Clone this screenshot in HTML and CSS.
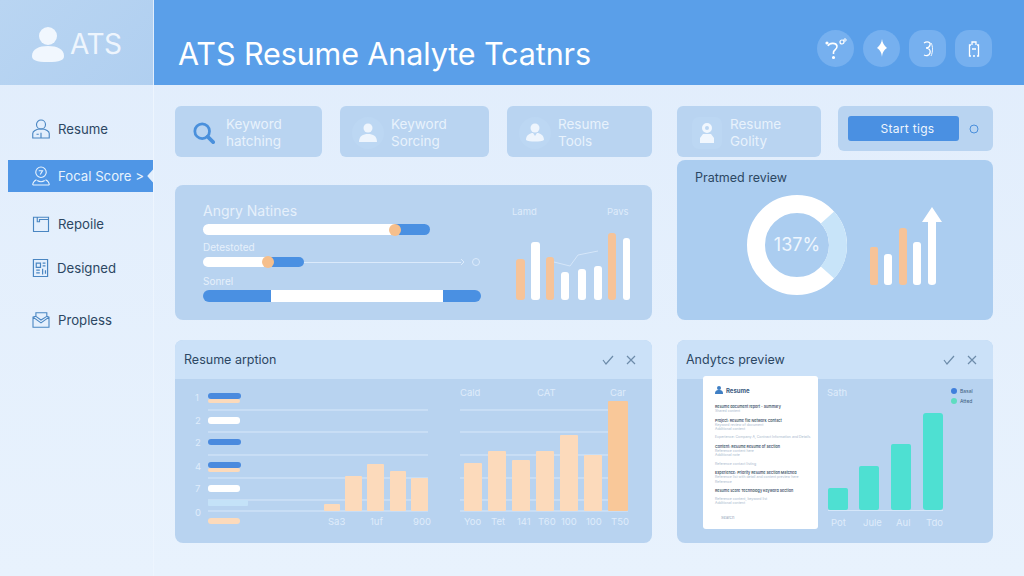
FILE: index.html
```html
<!DOCTYPE html>
<html lang="en">

<head>
	<meta name="viewport" content="width=device-width, initial-scale=1">
	<title>ATS Resume Analyte Tcatnrs</title>
	<link rel="stylesheet" href="styles.css">
</head>

<body>
	<div class="logo">
		<svg width="34" height="38" viewBox="0 0 34 38">
			<circle cx="17" cy="11" r="9" fill="#f1f7fe" />
			<path d="M1 31c0-7 7-10 16-10s16 3 16 10c0 4-4 6-16 6S1 35 1 31z" fill="#f1f7fe" />
		</svg>
		<span>ATS</span>
	</div>
	<header class="topbar">
		<h1>ATS Resume Analyte Tcatnrs</h1>
		<div class="top-actions">
			<span class="top-btn">
				<svg width="24" height="24" viewBox="0 0 24 24" fill="none" stroke="#fff" stroke-width="1.6">
					<path d="M4 9c1-3 8-4 9 0 .5 3-3 4-3.500 6v2" />
					<circle cx="9.500" cy="20.500" r=".8" />
					<circle cx="3" cy="6" r=".8" />
					<circle cx="18" cy="5" r="2" stroke-width="1.200" />
					<circle cx="21" cy="3" r="1.200" stroke-width="1" />
				</svg>
			</span>
			<span class="top-btn">
				<svg width="24" height="24" viewBox="0 0 24 24">
					<path d="M12 2c.5 4 2 6 5 9-3 2-4.500 4-5 9-.5-5-2-7-5-9 3-3 4.500-5 5-9z" fill="#fff" />
				</svg>
			</span>
			<span class="top-btn top-btn-square">
				<svg width="24" height="24" viewBox="0 0 24 24" fill="none" stroke="#fff" stroke-width="1.300">
					<path d="M8 6c3-2 7-1 6 2-.5 2-2.500 3-4 3 2.500 0 5 2 4 5-1 3-4 3-6 2" />
					<path d="M15 6c2 3 2 9 0 13" stroke-width=".9" />
				</svg>
			</span>
			<span class="top-btn top-btn-square">
				<svg width="24" height="24" viewBox="0 0 24 24" fill="none" stroke="#fff" stroke-width="1.300">
					<path d="M9 8H7.500v11H9M15 8h1.500v11H15" />
					<path d="M10 8V5h4v3M10 12h4M11 19h2" />
				</svg>
			</span>
		</div>
	</header>

	<aside class="sidebar">
		<ul>
			<li>
				<svg width="18" height="20" viewBox="0 0 24 26" fill="none" stroke="#4a86c2" stroke-width="1.500">
					<circle cx="12" cy="7" r="6" />
					<path d="M1 25v-6c0-3 4-6 11-6s11 3 11 6v6zM12 18v7M6 20h3" />
				</svg>
				Resume
			</li>
			<li class="active">
				<svg width="18" height="20" viewBox="0 0 24 26" fill="none" stroke="#e8f3fd" stroke-width="1.500">
					<circle cx="12" cy="8" r="7" />
					<path d="M9 6h5l-3 5M1 25c0-4 3-6 5-7M23 25c0-4-3-6-5-7M1 25h22M7 19c3 2 7 2 10 0" />
				</svg>
				Focal Score &gt;
			</li>
			<li>
				<svg width="18" height="18" viewBox="0 0 24 24" fill="none" stroke="#4a86c2" stroke-width="1.500">
					<path d="M2 3h20v19H2zM7 3v6h3V6h12" />
				</svg>
				Repoile
			</li>
			<li>
				<svg width="17" height="20" viewBox="0 0 24 28" fill="none" stroke="#4a86c2" stroke-width="1.700">
					<path d="M2 2h20v24H2zM6 7h6v6H6zM15 7h4M15 11h4M6 17h5M15 15v8M6 21h5M19 17v5" />
				</svg>
				Designed
			</li>
			<li>
				<svg width="18" height="16" viewBox="0 0 24 22" fill="none" stroke="#4a86c2" stroke-width="1.500">
					<path d="M1 7l4-1V1h15v5l3 1v14H1zM1 7l11 8 11-8M5 6l7 5 8-5" />
				</svg>
				Propless
			</li>
		</ul>
	</aside>

	<main>
		<div class="column">
			<div class="tiles tiles-left">
				<div class="tile">
					<svg class="tile-search" width="22" height="24" viewBox="0 0 24 26" fill="none" stroke="#4a90dc">
						<circle cx="10" cy="11" r="8" stroke-width="3" />
						<path d="M16 17l6 6" stroke-width="4" stroke-linecap="round" />
					</svg>
					<span>Keyword<br>hatching</span>
				</div>
				<div class="tile">
					<span class="tile-icon">
						<svg width="18" height="20" viewBox="0 0 18 20" fill="#eef5fd">
							<circle cx="9" cy="5" r="4.500" />
							<path d="M0 19c0-6 4-8 9-8s9 2 9 8z" />
						</svg>
					</span>
					<span>Keyword<br>Sorcing</span>
				</div>
				<div class="tile">
					<span class="tile-icon">
						<svg width="18" height="20" viewBox="0 0 18 20" fill="#eef5fd">
							<circle cx="9" cy="5" r="4.500" />
							<path d="M0 17c0-5 4-7 7-7l2 3 2-3c3 0 7 2 7 7-3 2-15 2-18 0z" />
						</svg>
					</span>
					<span>Resume<br>Tools</span>
				</div>
			</div>

			<section class="panel panel-meters">
				<div class="meters">
					<h2>Angry Natines</h2>
					<div class="track track-one">
						<div class="seg seg-white seg-knob" style="width:192px"><i></i></div>
						<div class="seg seg-blue" style="width:35px"></div>
					</div>
					<p>Detestoted</p>
					<div class="rail">
						<div class="track track-two">
							<div class="seg seg-white seg-knob" style="width:65px"><i></i></div>
							<div class="seg seg-blue" style="width:36px"></div>
						</div>
						<span class="rail-line"></span>
						<svg width="20" height="12" viewBox="0 0 20 12" fill="none" stroke="#dbeafb">
							<path d="M-2 1l5 5-5 5" />
							<circle cx="15" cy="6" r="3.500" />
						</svg>
					</div>
					<p>Sonrel</p>
					<div class="track track-three">
						<div class="seg seg-blue" style="width:68px"></div>
						<div class="seg seg-white" style="width:172px"></div>
						<div class="seg seg-blue" style="width:38px"></div>
					</div>
				</div>
				<svg class="meter-chart" width="135" height="135" viewBox="505 185 135 135">
					<text class="lbl" x="512" y="215">Lamd</text>
					<text class="lbl" x="607" y="215">Pavs</text>
					<path d="M554 262l16 4 8-11 20-4" fill="none" stroke="#d5e6f9" />
					<rect class="orange" x="516" y="259" width="9" height="41" rx="3" />
					<rect class="white" x="531" y="242" width="9" height="58" rx="3" />
					<rect class="orange" x="546" y="257" width="8" height="43" rx="3" />
					<rect class="white" x="561" y="272" width="8" height="28" rx="3" />
					<rect class="white" x="578" y="269" width="8" height="31" rx="3" />
					<rect class="white" x="594" y="266" width="8" height="34" rx="3" />
					<rect class="orange" x="608" y="233" width="8" height="67" rx="3" />
					<rect class="white" x="623" y="238" width="7" height="62" rx="3" />
				</svg>
			</section>

			<section class="panel panel-bottom">
				<div class="panel-head">
					<h3>Resume arption</h3>
					<div class="head-actions">
						<svg width="12" height="12" viewBox="0 0 12 12"><path d="M1 6l3 4 7-8" /></svg>
						<svg width="12" height="12" viewBox="0 0 12 12"><path d="M2 2l8 8M10 2l-8 8" /></svg>
					</div>
				</div>
				<svg class="panel-chart" width="477" height="164" viewBox="175 379 477 164">
					<g class="grid">
						<path d="M208 410h220M208 432h220M208 455h220M208 478h220M208 500h220M208 511h220" />
						<path d="M460 410h168M460 432h168M460 455h168M460 478h168M460 500h168M460 511h168" />
					</g>
					<text class="lbl" x="195" y="401">1</text>
					<text class="lbl" x="195" y="424">2</text>
					<text class="lbl" x="195" y="446">2</text>
					<text class="lbl" x="195" y="470">4</text>
					<text class="lbl" x="195" y="492">7</text>
					<text class="lbl" x="195" y="516">0</text>
					<rect class="blue" x="208" y="393" width="33" height="6" rx="3" />
					<rect class="peach" x="208" y="399" width="32" height="4" rx="2" />
					<rect class="white" x="208" y="417" width="32" height="7" rx="3" />
					<rect class="blue" x="208" y="439" width="33" height="6" rx="3" />
					<rect class="blue" x="208" y="462" width="33" height="6" rx="3" />
					<rect class="peach" x="208" y="468" width="32" height="4" rx="2" />
					<rect class="white" x="208" y="485" width="32" height="7" rx="3" />
					<rect class="pale" x="208" y="500" width="40" height="6" rx="1" />
					<rect class="peach" x="208" y="518" width="32" height="6" rx="3" />
					<g class="peach">
						<rect x="324" y="504" width="16" height="7" rx="1" />
						<rect x="345" y="476" width="17" height="35" rx="1" />
						<rect x="367" y="464" width="17" height="47" rx="1" />
						<rect x="390" y="471" width="16" height="40" rx="1" />
						<rect x="411" y="478" width="17" height="33" rx="1" />
						<rect x="464" y="463" width="18" height="48" rx="1" />
						<rect x="488" y="451" width="18" height="60" rx="1" />
						<rect x="512" y="460" width="18" height="51" rx="1" />
						<rect x="536" y="451" width="18" height="60" rx="1" />
						<rect x="560" y="435" width="18" height="76" rx="1" />
						<rect x="584" y="455" width="18" height="56" rx="1" />
					</g>
					<rect class="peach-dark" x="608" y="401" width="20" height="110" rx="1" />
					<text class="lbl" x="460" y="396">Cald</text>
					<text class="lbl" x="537" y="396">CAT</text>
					<text class="lbl" x="610" y="396">Car</text>
					<text class="lbl" x="328" y="525">Sa3</text>
					<text class="lbl" x="370" y="525">1uf</text>
					<text class="lbl" x="413" y="525">900</text>
					<text class="lbl" x="464" y="525">Yoo</text>
					<text class="lbl" x="491" y="525">Tet</text>
					<text class="lbl" x="517" y="525">141</text>
					<text class="lbl" x="538" y="525">T60</text>
					<text class="lbl" x="561" y="525">100</text>
					<text class="lbl" x="586" y="525">100</text>
					<text class="lbl" x="611" y="525">T50</text>
				</svg>
			</section>
		</div>

		<div class="column">
			<div class="tiles tiles-right">
				<div class="tile">
					<span class="tile-icon tile-icon-square">
						<svg width="14" height="22" viewBox="0 0 14 22" fill="#f1f7fe">
							<path d="M7 1a5 5 0 1 1 0 10A5 5 0 0 1 7 1zm0 3a2 2 0 1 0 0 4 2 2 0 0 0 0-4z" fill-rule="evenodd" />
							<path d="M3 12h8l3 4v5H0v-5z" />
						</svg>
					</span>
					<span>Resume<br>Golity</span>
				</div>
				<div class="tile tile-action">
					<button>Start tigs</button>
					<svg width="12" height="12" viewBox="0 0 12 12" fill="none" stroke="#4a8fdc">
						<circle cx="6" cy="6" r="4" />
					</svg>
				</div>
			</div>

			<section class="panel panel-review">
				<h3>Pratmed review</h3>
				<svg class="panel-chart" width="316" height="136" viewBox="677 184 316 136">
					<circle cx="797" cy="245" r="41" fill="none" stroke="#fff" stroke-width="18" />
					<path d="M827.500 217.600A41 41 0 0 1 827.500 272.400" fill="none" stroke="#c8e4f9" stroke-width="18" />
					<text class="donut-value" x="797" y="251">137%</text>
					<rect class="orange" x="870" y="247" width="8" height="38" rx="2" />
					<rect class="white" x="884" y="254" width="8" height="31" rx="3" />
					<rect class="orange" x="899" y="228" width="8" height="57" rx="3" />
					<rect class="white" x="913" y="242" width="8" height="43" rx="3" />
					<path class="white" d="M932 207l10 15h-6v60q0 3-4 3t-4-3v-60h-6z" />
				</svg>
			</section>

			<section class="panel panel-bottom">
				<div class="panel-head">
					<h3>Andytcs preview</h3>
					<div class="head-actions">
						<svg width="12" height="12" viewBox="0 0 12 12"><path d="M1 6l3 4 7-8" /></svg>
						<svg width="12" height="12" viewBox="0 0 12 12"><path d="M2 2l8 8M10 2l-8 8" /></svg>
					</div>
				</div>
				<svg class="panel-chart" width="316" height="164" viewBox="677 379 316 164">
					<text class="lbl" x="827" y="396">Sath</text>
					<circle cx="954" cy="391" r="3" fill="#3f7fdc" />
					<text class="lbl lbl-tiny" x="960" y="393">Basal</text>
					<circle cx="954" cy="401" r="3" fill="#5fdcc0" />
					<text class="lbl lbl-tiny" x="960" y="403">Atted</text>
					<path d="M828 510.500h115" stroke="#d5e6f9" />
					<g class="teal">
						<rect x="828" y="488" width="20" height="22" rx="2" />
						<rect x="859" y="466" width="20" height="44" rx="2" />
						<rect x="891" y="444" width="20" height="66" rx="2" />
						<rect x="923" y="413" width="20" height="97" rx="3" />
					</g>
					<text class="lbl" x="831" y="526">Pot</text>
					<text class="lbl" x="863" y="526">Jule</text>
					<text class="lbl" x="896" y="526">Aul</text>
					<text class="lbl" x="926" y="526">Tdo</text>
				</svg>
				<article class="doc">
					<div class="doc-head">
						<svg width="8" height="8" viewBox="0 0 8 8" fill="#3f7fc4">
							<circle cx="4" cy="2" r="2" />
							<path d="M0 8c0-3 1-4 4-4s4 1 4 4z" />
						</svg>
						<b>Resume</b>
					</div>
					<p class="doc-strong">Resume document report - Summary</p>
					<p class="doc-line">Shared content</p>
					<p class="doc-strong doc-gap">Project: Resume file Network Contact</p>
					<p class="doc-line">Keyword review of document</p>
					<p class="doc-line">Additional content</p>
					<p class="doc-line doc-gap-sm">Experience: Company A, Contract Information and Details</p>
					<p class="doc-strong doc-gap">Content: Resume Resume of Section</p>
					<p class="doc-line">Reference content here</p>
					<p class="doc-line">Additional note</p>
					<p class="doc-line doc-gap-sm">Reference contact listing</p>
					<p class="doc-strong doc-gap">Experience: Priority Resume Section Matched</p>
					<p class="doc-line">Reference list with detail and content preview here</p>
					<p class="doc-line">Reference</p>
					<p class="doc-strong doc-gap">Resume score Technology Keyword Section</p>
					<p class="doc-line doc-gap-sm">Reference content, keyword list</p>
					<p class="doc-line">Additional content</p>
					<p class="doc-foot">Search</p>
				</article>
			</section>
		</div>
	</main>
</body>

</html>
```

FILE: styles.css
```css
* {
	box-sizing: border-box;
}

html,
body {
	margin: 0;
	height: 100%;
	overflow: hidden;
}

body {
	display: grid;
	grid-template-columns: 153px 1fr;
	grid-template-rows: 85px 491px;
	background: linear-gradient(180deg, #e1edfc, #e8f2fd);
	font-family: Inter, "Noto Sans", sans-serif;
	color: #2c4763;
}

h1,
h2,
h3,
p,
ul {
	margin: 0;
	padding: 0;
	font-weight: 400;
}

svg {
	display: block;
	flex: none;
}

.logo {
	display: flex;
	align-items: center;
	gap: 5px;
	padding: 3px 0 0 31px;
	background: linear-gradient(135deg, #b9d5f2, #b0cff0);
	font-size: 28px;
	color: #eef5fd;
	letter-spacing: -.5px;
}

.topbar {
	display: flex;
	align-items: center;
	justify-content: space-between;
	padding: 0 32px 0 24px;
	margin-left: 1px;
	background: #5a9fe9;
	color: #fff;
}

h1 {
	font-size: 30.500px;
	padding-top: 21px;
	letter-spacing: -.1px;
}

.top-actions {
	display: flex;
	gap: 9px;
	padding-top: 12px;
}

.top-btn {
	display: flex;
	align-items: center;
	justify-content: center;
	width: 37px;
	height: 37px;
	border-radius: 50%;
	background: #76b0ef;
}

.top-btn-square {
	border-radius: 14px;
}

.sidebar {
	padding-top: 28px;
	border-right: 1px solid #edf5fe;
	width: 154px;
}

.sidebar ul {
	list-style: none;
}

.sidebar li {
	display: flex;
	align-items: center;
	gap: 8px;
	height: 32px;
	margin-left: 8px;
	padding-left: 24px;
	font-size: 13.200px;
}

.sidebar li:nth-child(2) {
	margin-top: 15px;
}

.sidebar li:nth-child(3) {
	margin-top: 16px;
}

.sidebar li:nth-child(4) {
	margin-top: 12px;
}

.sidebar li:nth-child(5) {
	margin-top: 20px;
}

.sidebar li.active {
	background: #4f96e6;
	color: #e8f3fd;
	clip-path: polygon(0 0, 100% 0, 100% 30%, 96% 50%, 100% 70%, 100% 100%, 0 100%);
}

main {
	display: grid;
	grid-template-columns: 477px 316px;
	gap: 25px;
	padding: 21px 0 0 21px;
	margin-left: 1px;
}

.column {
	display: flex;
	flex-direction: column;
}

.tiles {
	display: grid;
	height: 51px;
}

.tiles-left {
	grid-template-columns: 147px 149px 145px;
	justify-content: space-between;
	margin-bottom: 28px;
}

.tiles-right {
	grid-template-columns: 144px 155px;
	justify-content: space-between;
	align-items: start;
	margin-bottom: 3px;
}

.tile {
	display: flex;
	align-items: center;
	height: 51px;
	padding: 2px 0 0 18px;
	gap: 11px;
	border-radius: 6px;
	background: #b9d4f1;
	font-size: 13.500px;
	line-height: 17px;
	color: #e8f2fc;
}

.tile-icon {
	display: flex;
	align-items: center;
	justify-content: center;
	width: 32px;
	height: 32px;
	margin: 0 -4px 0 -6px;
	border-radius: 50%;
	background: #bcd7f3;
}

.tile-icon-square {
	width: 30px;
	border-radius: 7px;
	margin: 0 -3px;
}

.tile-action {
	height: 45px;
	padding: 0 0 0 10px;
	gap: 9px;
}

button {
	width: 111px;
	height: 25px;
	padding: 0 0 0 8px;
	border: 0;
	border-radius: 3px;
	background: #4a90e2;
	color: #eef5fd;
	font: 12px Inter, sans-serif;
	letter-spacing: .3px;
}

.panel {
	border-radius: 8px;
	background: #b8d3f0;
}

.panel-meters {
	display: flex;
	height: 135px;
	margin-bottom: 20px;
	padding-left: 28px;
	gap: 24px;
}

.meters {
	width: 278px;
	padding-top: 18px;
}

.meters h2 {
	font-size: 14px;
	line-height: 16px;
	color: #e6f0fb;
}

.meters p {
	margin: 6px 0 3px;
	font-size: 10px;
	line-height: 12px;
	color: #e6f0fb;
}

.meters p:last-of-type {
	margin-top: 7px;
}

.track {
	display: flex;
}

.track-one {
	height: 11px;
	margin-top: 5px;
}

.track-two {
	height: 10px;
}

.track-three {
	height: 12px;
}

.seg {
	position: relative;
}

.seg:first-child {
	border-radius: 6px 0 0 6px;
}

.seg:last-child {
	border-radius: 0 6px 6px 0;
}

.seg-white {
	background: #fff;
}

.seg-blue {
	background: #4a90e2;
}

.seg-knob i {
	position: absolute;
	z-index: 1;
	top: 50%;
	right: -6px;
	width: 12px;
	height: 12px;
	margin-top: -6px;
	border-radius: 50%;
	background: #f6bf8c;
}

.rail {
	display: flex;
	align-items: center;
}

.rail-line {
	width: 157px;
	height: 1px;
	background: #dbeafb;
}

.panel-review {
	height: 160px;
	margin-bottom: 20px;
	background: #abcdf0;
}

.panel-review h3 {
	padding: 10px 0 0 18px;
	height: 24px;
	font-size: 12.500px;
	line-height: 16px;
}

.panel-bottom {
	position: relative;
	height: 203px;
	overflow: hidden;
}

.panel-head {
	display: flex;
	align-items: center;
	justify-content: space-between;
	height: 39px;
	padding: 0 15px 0 9px;
	background: #cbe1f8;
}

.panel-head h3 {
	font-size: 12.500px;
}

.head-actions {
	display: flex;
	gap: 11px;
}

.head-actions path {
	fill: none;
	stroke: #6d8caa;
	stroke-width: 1.200;
}

.lbl {
	font-size: 9.500px;
	fill: #dfecfb;
}

.lbl-tiny {
	font-size: 5px;
	fill: #40617f;
}

.donut-value {
	font-size: 18px;
	fill: #eef6fe;
	text-anchor: middle;
}

.white {
	fill: #fff;
}

.orange {
	fill: #f6c398;
}

.blue {
	fill: #4a8ade;
}

.peach {
	fill: #fcdabb;
}

.peach-dark {
	fill: #f9c899;
}

.pale {
	fill: #c4e2f8;
}

.teal {
	fill: #4ee0d2;
}

.grid {
	fill: none;
	stroke: #d8e8fa;
}

.doc {
	position: absolute;
	left: 26px;
	top: 36px;
	width: 115px;
	height: 153px;
	padding: 9px 8px 0 12px;
	border-radius: 3px;
	background: #fff;
	white-space: nowrap;
	overflow: hidden;
}

.doc-head {
	display: flex;
	align-items: center;
	gap: 3px;
	height: 10px;
	margin-bottom: 10px;
	font-size: 6px;
	color: #3a5a80;
}

.doc p {
	font-size: 3.500px;
	line-height: 4.300px;
	color: #a8b8cc;
}

.doc .doc-strong {
	font-size: 3.700px;
	color: #44566c;
	font-weight: 600;
}

.doc .doc-gap {
	margin-top: 5px;
}

.doc .doc-gap-sm {
	margin-top: 4px;
}

.doc .doc-foot {
	margin-top: 10px;
	padding-left: 6px;
	font-size: 4px;
	color: #8fa3b8;
}
```
